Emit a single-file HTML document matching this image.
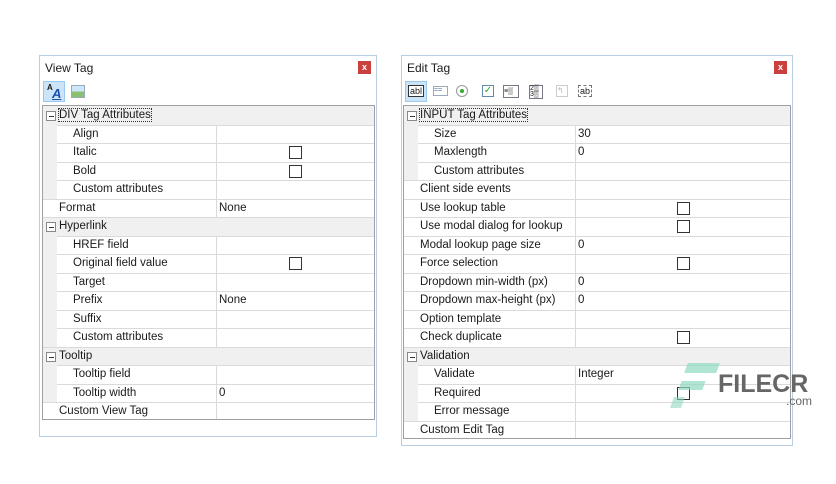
<!DOCTYPE html>
<html><head><meta charset="utf-8"><style>
body{margin:0;width:836px;height:484px;background:#fff;position:relative;overflow:hidden;font-family:"Liberation Sans",Tahoma,sans-serif;font-size:11.5px;color:#1a1a1a}
.p{position:absolute;border:1px solid #b9cde3;background:#fff}
.tt{position:absolute;left:5px;top:5px;font-size:12px}
.x{position:absolute;top:5px;width:13px;height:13px;background:#c8413d;color:#fff;font-size:9px;font-weight:bold;text-align:center;line-height:13px}
.tb{position:absolute;top:24px;left:1px;right:1px;height:23px;background:#fff}
.g{position:absolute;background:#f0f0f0;border:1px solid #a0a0a0;overflow:hidden}
.r{position:absolute;left:0;right:0;height:18px;border-top:1px solid #dadada;background:#fff}
.r span{position:absolute;top:2px}
.c{background:#f0f0f0}
.ch{left:14px}
.v{position:absolute;top:0;bottom:0;border-left:1px solid #dadada}
.cb{position:absolute;top:2px;width:11px;height:11px;border:1px solid #333;background:#fff}
.m{position:absolute;left:3px;top:4px;width:8px;height:8px;border:1px solid #888;background:#fff}
.m:after{content:"";position:absolute;left:2px;top:4px;width:5px;height:1px;background:#333}
.f{outline:1px dotted #333}
.last{border-bottom:1px solid #dadada}
.g>.r:first-child{border-top-color:transparent}
</style></head><body>

<!-- LEFT PANEL -->
<div class="p" style="left:39px;top:55px;width:336px;height:380px">
 <div class="tt">View Tag</div>
 <div class="x" style="left:318px">x</div>
 <div class="tb">
  <div style="position:absolute;left:2px;top:1px;width:22px;height:21px;background:#cce4f7;border:1px solid #99c9ef;box-sizing:border-box"></div>
  <span style="position:absolute;left:6px;top:3px;font-size:8px;font-weight:bold">A</span>
  <span style="position:absolute;left:11px;top:6px;font-size:13px;font-weight:bold;font-style:italic;color:#1e4fb0;text-decoration:underline">A</span>
  <div style="position:absolute;left:30px;top:5px;width:12px;height:11px;border:1px solid #9ab;background:linear-gradient(#cfe6f8 50%,#8bc070 50%)"></div>
 </div>
 <div class="g" style="left:2px;top:49px;width:331px;height:313px">
  <div class="r c" style="top:0"><div class="m"></div><span class="f" style="left:16px">DIV Tag Attributes</span></div>
  <div class="r ch" style="top:19px"><span style="left:16px">Align</span><div class="v" style="left:159px"></div></div>
  <div class="r ch" style="top:37px"><span style="left:16px">Italic</span><div class="v" style="left:159px"></div><div class="cb" style="left:232px"></div></div>
  <div class="r ch" style="top:56px"><span style="left:16px">Bold</span><div class="v" style="left:159px"></div><div class="cb" style="left:232px"></div></div>
  <div class="r ch" style="top:74px"><span style="left:16px">Custom attributes</span><div class="v" style="left:159px"></div></div>
  <div class="r" style="top:93px"><span style="left:16px">Format</span><div class="v" style="left:173px"></div><span style="left:176px">None</span></div>
  <div class="r c" style="top:111px"><div class="m"></div><span style="left:16px">Hyperlink</span></div>
  <div class="r ch" style="top:130px"><span style="left:16px">HREF field</span><div class="v" style="left:159px"></div></div>
  <div class="r ch" style="top:148px"><span style="left:16px">Original field value</span><div class="v" style="left:159px"></div><div class="cb" style="left:232px"></div></div>
  <div class="r ch" style="top:167px"><span style="left:16px">Target</span><div class="v" style="left:159px"></div></div>
  <div class="r ch" style="top:185px"><span style="left:16px">Prefix</span><div class="v" style="left:159px"></div><span style="left:162px">None</span></div>
  <div class="r ch" style="top:204px"><span style="left:16px">Suffix</span><div class="v" style="left:159px"></div></div>
  <div class="r ch" style="top:222px"><span style="left:16px">Custom attributes</span><div class="v" style="left:159px"></div></div>
  <div class="r c" style="top:241px"><div class="m"></div><span style="left:16px">Tooltip</span></div>
  <div class="r ch" style="top:259px"><span style="left:16px">Tooltip field</span><div class="v" style="left:159px"></div></div>
  <div class="r ch" style="top:278px"><span style="left:16px">Tooltip width</span><div class="v" style="left:159px"></div><span style="left:162px">0</span></div>
  <div class="r last" style="top:296px"><span style="left:16px">Custom View Tag</span><div class="v" style="left:173px"></div></div>
 </div>
</div>

<!-- RIGHT PANEL -->
<div class="p" style="left:401px;top:55px;width:390px;height:389px">
 <div class="tt">Edit Tag</div>
 <div class="x" style="left:372px">x</div>
 <div class="tb">
  <div style="position:absolute;left:2px;top:1px;width:22px;height:21px;background:#cce4f7;border:1px solid #99c9ef;box-sizing:border-box"></div>
  <span style="position:absolute;left:5px;top:5px;font-size:9px;border:1px solid #333;padding:0 1px;line-height:10px;background:#fff">abl</span>
  <span style="position:absolute;left:30px;top:6px;width:13px;height:8px;border:1px solid #9ab;font-size:7px;line-height:8px;color:#57a">==</span>
  <span style="position:absolute;left:53px;top:5px;width:10px;height:10px;border:1px solid #999;border-radius:50%"></span>
  <span style="position:absolute;left:57px;top:9px;width:4px;height:4px;background:#3a3;border-radius:50%"></span>
  <span style="position:absolute;left:79px;top:5px;width:10px;height:10px;border:1px solid #68a;color:#2a2;font-size:10px;line-height:10px;text-align:center">✓</span>
  <span style="position:absolute;left:100px;top:5px;width:14px;height:11px;border:1px solid #778;font-size:7px;line-height:11px">≡▒</span>
  <span style="position:absolute;left:126px;top:5px;width:12px;height:12px;border:1px solid #778;font-size:7px;line-height:6px">2▒<br>3▒</span>
  <span style="position:absolute;left:153px;top:5px;width:10px;height:10px;border:1px solid #ccc;color:#bbb;font-size:8px">↰</span>
  <span style="position:absolute;left:175px;top:5px;font-size:9px;border:1px dashed #777;padding:0 1px;line-height:10px">ab</span>
 </div>
 <div class="g" style="left:1px;top:49px;width:386px;height:332px">
  <div class="r c" style="top:0"><div class="m"></div><span class="f" style="left:16px">INPUT Tag Attributes</span></div>
  <div class="r ch" style="top:19px"><span style="left:16px">Size</span><div class="v" style="left:157px"></div><span style="left:160px">30</span></div>
  <div class="r ch" style="top:37px"><span style="left:16px">Maxlength</span><div class="v" style="left:157px"></div><span style="left:160px">0</span></div>
  <div class="r ch" style="top:56px"><span style="left:16px">Custom attributes</span><div class="v" style="left:157px"></div></div>
  <div class="r" style="top:74px"><span style="left:16px">Client side events</span><div class="v" style="left:171px"></div></div>
  <div class="r" style="top:93px"><span style="left:16px">Use lookup table</span><div class="v" style="left:171px"></div><div class="cb" style="left:273px"></div></div>
  <div class="r" style="top:111px"><span style="left:16px">Use modal dialog for lookup</span><div class="v" style="left:171px"></div><div class="cb" style="left:273px"></div></div>
  <div class="r" style="top:130px"><span style="left:16px">Modal lookup page size</span><div class="v" style="left:171px"></div><span style="left:174px">0</span></div>
  <div class="r" style="top:148px"><span style="left:16px">Force selection</span><div class="v" style="left:171px"></div><div class="cb" style="left:273px"></div></div>
  <div class="r" style="top:167px"><span style="left:16px">Dropdown min-width (px)</span><div class="v" style="left:171px"></div><span style="left:174px">0</span></div>
  <div class="r" style="top:185px"><span style="left:16px">Dropdown max-height (px)</span><div class="v" style="left:171px"></div><span style="left:174px">0</span></div>
  <div class="r" style="top:204px"><span style="left:16px">Option template</span><div class="v" style="left:171px"></div></div>
  <div class="r" style="top:222px"><span style="left:16px">Check duplicate</span><div class="v" style="left:171px"></div><div class="cb" style="left:273px"></div></div>
  <div class="r c" style="top:241px"><div class="m"></div><span style="left:16px">Validation</span></div>
  <div class="r ch" style="top:259px"><span style="left:16px">Validate</span><div class="v" style="left:157px"></div><span style="left:160px">Integer</span></div>
  <div class="r ch" style="top:278px"><span style="left:16px">Required</span><div class="v" style="left:157px"></div><div class="cb" style="left:259px"></div></div>
  <div class="r ch" style="top:296px"><span style="left:16px">Error message</span><div class="v" style="left:157px"></div></div>
  <div class="r last" style="top:315px"><span style="left:16px">Custom Edit Tag</span><div class="v" style="left:171px"></div></div>
 </div>
</div>

<!-- watermark -->
<div style="position:absolute;left:686px;top:363px;width:32px;height:10px;background:#8fd8c0;opacity:.7;transform:skewX(-20deg)"></div>
<div style="position:absolute;left:680px;top:381px;width:24px;height:9px;background:#8fd8c0;opacity:.7;transform:skewX(-20deg)"></div>
<div style="position:absolute;left:672px;top:397px;width:11px;height:11px;background:#8fd8c0;opacity:.6;transform:skewX(-20deg)"></div>
<div style="position:absolute;left:718px;top:371px;font-size:25px;font-weight:bold;color:#666;line-height:26px">FILECR</div>
<div style="position:absolute;left:786px;top:394px;font-size:12px;color:#666">.com</div>
</body></html>
